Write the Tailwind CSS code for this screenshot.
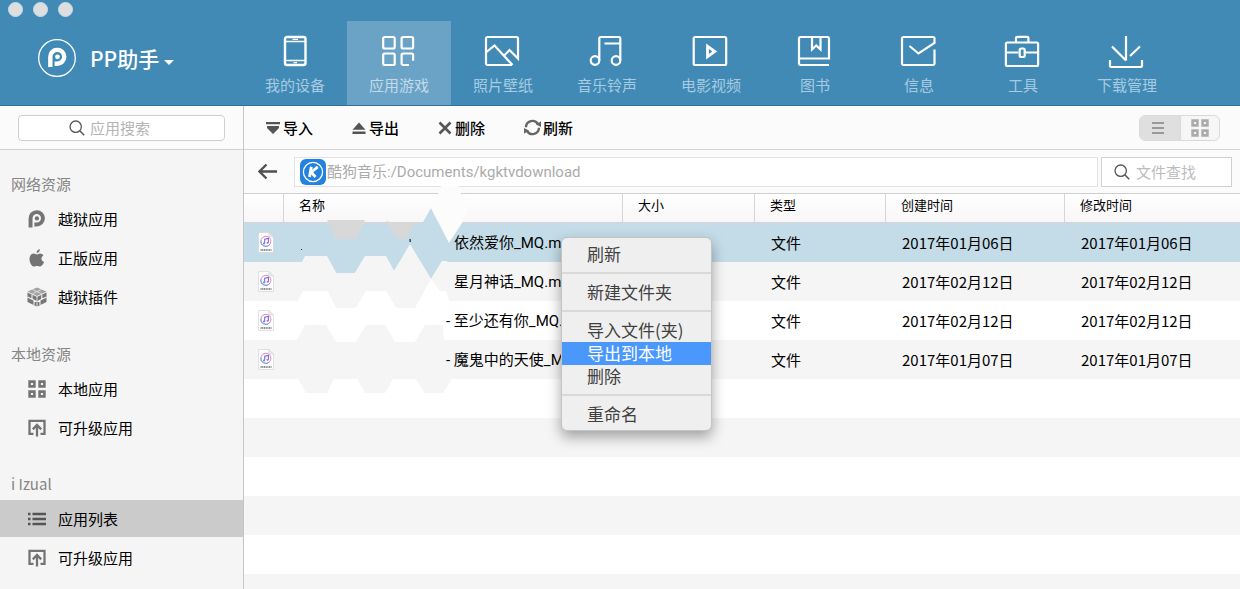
<!DOCTYPE html>
<html lang="zh-CN">
<head>
<meta charset="utf-8">
<meta name="viewport" content="width=device-width, initial-scale=1">
<title>PP助手</title>
<script src="https://cdn.jsdelivr.net/npm/@tailwindcss/browser@4"></script>
</head>
<body class="flex h-screen flex-col overflow-hidden bg-white font-['Noto_Sans_CJK_SC',sans-serif] text-[15px] leading-6 text-black">

<!-- shared symbols -->
<svg class="hidden" aria-hidden="true">
  <symbol id="i-search" viewBox="0 0 16 16"><circle cx="6.7" cy="6.7" r="5.7" fill="none" stroke="currentColor" stroke-width="1.3"/><path d="M10.8 10.8 15.2 15.2" stroke="currentColor" stroke-width="1.5"/></symbol>
  <symbol id="i-grid" viewBox="0 0 18 18"><path fill="none" stroke="currentColor" stroke-width="2.6" d="M1.6 1.6h4.8v4.8H1.6zM11.6 1.6h4.8v4.8h-4.8zM1.6 11.6h4.8v4.8H1.6zM11.6 11.6h4.8v4.8h-4.8z"/></symbol>
  <symbol id="i-upgrade" viewBox="0 0 18 18"><path fill="none" stroke="currentColor" stroke-width="2.300" d="M5.500 14.800H1.500V1.800h15V14.800H12.500M9 17.500V6M4.800 10.400 9 6l4.200 4.400"/></symbol>
  <symbol id="i-p" viewBox="0 0 20 21"><path fill="none" stroke="currentColor" stroke-width="4.600" d="M3 20.500V9.800A7.300 7.300 0 1 1 10.300 17H7.500"/><circle cx="10.500" cy="9.800" r="2.500" fill="currentColor"/></symbol>
  <symbol id="i-file" viewBox="0 0 16 21"><path fill="#fff" stroke="#d2d2d6" stroke-width=".7" d="M.6.500h10.200l4.600 4.600v15.400H.6z"/><path fill="#e9e9ec" stroke="#d2d2d6" stroke-width=".5" d="M10.800.500v4.600h4.600z"/><circle cx="7.900" cy="9.300" r="5" fill="#fff" stroke="#e08ab8" stroke-width="1"/><path d="M3 8.500a5 5 0 0 0 8.700 4.200" fill="none" stroke="#63a9ee"/><path d="M6.700 11.400V7.200l3.700-.8v4.300" fill="none" stroke="#6f6be6" stroke-width="1.100"/><ellipse cx="5.900" cy="11.500" rx="1.100" ry=".9" fill="#5b8df0"/><ellipse cx="9.600" cy="10.800" rx="1.100" ry=".9" fill="#e0529a"/><path d="M2.500 18h11" stroke="#8e8e93" stroke-width="1.800" stroke-dasharray="1.200 .5"/></symbol>
</svg>

<header class="flex h-[106px] shrink-0 border-b border-[#2f6f9f] bg-[#418ab6]">
  <div class="flex w-[243px] shrink-0 flex-col">
    <div class="flex gap-[10px] pt-[2px] pl-2">
      <button aria-label="关闭" class="size-[15px] rounded-full border border-[#c5dcea] bg-[#dedede]"></button>
      <button aria-label="最小化" class="size-[15px] rounded-full border border-[#c5dcea] bg-[#dedede]"></button>
      <button aria-label="缩放" class="size-[15px] rounded-full border border-[#c5dcea] bg-[#dedede]"></button>
    </div>
    <button class="mt-[22px] flex items-center pl-[38px] text-[21px] leading-[38px] text-white">
      <svg class="size-[38px]" viewBox="0 0 38 38"><circle cx="19" cy="19" r="18.300" fill="none" stroke="#fff" stroke-width="1.300"/><use href="#i-p" x="9" y="8.500" width="20" height="20"/></svg>
      <span class="ml-[14px] font-medium">PP助手</span>
      <svg class="mt-2 ml-[5px] h-[5px] w-[10px]" viewBox="0 0 10 5"><path fill="#fff" d="M0 0h10L5 5z"/></svg>
    </button>
  </div>
  <nav class="flex min-w-0 flex-1 pt-[21px] text-[#a7cbe1]">
    <a href="#" class="flex w-[104px] flex-col items-center pt-[13px]">
      <svg class="size-[34px]" viewBox="0 0 34 34" fill="none" stroke="#fff" stroke-width="2"><rect x="7" y="3" width="20.500" height="28" rx="2" stroke-width="2.400"/><path d="M7 7.500h20.500M7 26.500h20.500" stroke-width="1.400"/><path d="M14.500 5.400h5.500M15.500 28.700h3.500" stroke-width="1.200"/></svg>
      <span class="mt-[5px]">我的设备</span></a>
    <a href="#" aria-current="page" class="flex w-[104px] flex-col items-center bg-[#6ba3c7] pt-[13px] text-[#c2dbea]">
      <svg class="size-[34px]" viewBox="0 0 34 34" fill="none" stroke="#fff" stroke-width="2.200"><rect x="1.200" y="3" width="11.500" height="11.500" rx="1.500"/><rect x="19.600" y="3" width="11.500" height="11.500" rx="1.500"/><rect x="1.200" y="19.500" width="11.500" height="11.500" rx="1.500"/><path d="M27 31H21.100a1.500 1.500 0 0 1-1.500-1.500V21a1.500 1.500 0 0 1 1.500-1.500h8.500a1.500 1.500 0 0 1 1.500 1.500v5.800"/></svg>
      <span class="mt-[5px]">应用游戏</span></a>
    <a href="#" class="flex w-[104px] flex-col items-center pt-[13px]">
      <svg class="size-[34px] overflow-visible" viewBox="1 0 34 34" fill="none" stroke="#fff" stroke-width="2.200"><path d="M27 31H2.500a1.500 1.500 0 0 1-1.500-1.500v-25A1.500 1.500 0 0 1 2.500 3h29A1.500 1.500 0 0 1 33 4.500V24.500L24.500 16 19.500 21.200"/><path d="M1.500 18 9.500 11.500 27.500 31"/></svg>
      <span class="mt-[5px]">照片壁纸</span></a>
    <a href="#" class="flex w-[104px] flex-col items-center pt-[13px]">
      <svg class="size-[34px] overflow-visible" viewBox="1 0 34 34" fill="none" stroke="#fff" stroke-width="2.200"><circle cx="6" cy="26.500" r="4.300"/><circle cx="27" cy="26.500" r="4.300"/><path d="M10.300 26.500V4.500A1.500 1.500 0 0 1 11.800 3h18a1.500 1.500 0 0 1 1.500 1.500v22M15.500 9.500h15.500"/></svg>
      <span class="mt-[5px]">音乐铃声</span></a>
    <a href="#" class="flex w-[104px] flex-col items-center pt-[13px]">
      <svg class="size-[34px] overflow-visible" viewBox="1 0 34 34" fill="none" stroke="#fff" stroke-width="2.200"><rect x="0.700" y="3" width="32.500" height="28" rx="1.500"/><path stroke-width="2.800" d="M14.500 12.200v10.500l7.300-5.200z"/></svg>
      <span class="mt-[5px]">电影视频</span></a>
    <a href="#" class="flex w-[104px] flex-col items-center pt-[13px]">
      <svg class="size-[34px] overflow-visible" viewBox="1 0 34 34" fill="none" stroke="#fff" stroke-width="2.200"><path d="M32 31H3.500A1.500 1.500 0 0 1 2 29.500v-25A1.500 1.500 0 0 1 3.500 3h27A1.500 1.500 0 0 1 32 4.500v20H2.500M15 3v12.500l4.300-4 4.200 4V3"/></svg>
      <span class="mt-[5px]">图书</span></a>
    <a href="#" class="flex w-[104px] flex-col items-center pt-[13px]">
      <svg class="size-[34px] overflow-visible" viewBox="1 0 34 34" fill="none" stroke="#fff" stroke-width="2.200"><path d="M33.500 15.500v14A1.500 1.500 0 0 1 32 31H2.500A1.500 1.500 0 0 1 1 29.500v-25A1.500 1.500 0 0 1 2.500 3H32a1.500 1.500 0 0 1 1.500 1.500V9L17.500 19.500 8.500 12"/></svg>
      <span class="mt-[5px]">信息</span></a>
    <a href="#" class="flex w-[104px] flex-col items-center pt-[13px]">
      <svg class="size-[34px] overflow-visible" viewBox="1 0 34 34" fill="none" stroke="#fff" stroke-width="2.200"><rect x=".9" y="8.500" width="32.200" height="23.500" rx="1.500"/><path d="M11 8V4a1.200 1.200 0 0 1 1.200-1.200h10A1.200 1.200 0 0 1 23.400 4v4M1 18.500h12.500M20.500 18.500H33"/><rect x="14.700" y="14.500" width="5" height="8.500" rx="1.500"/></svg>
      <span class="mt-[5px]">工具</span></a>
    <a href="#" class="flex w-[104px] flex-col items-center pt-[13px]">
      <svg class="size-[34px] overflow-visible" viewBox="1 0 34 34" fill="none" stroke="#fff" stroke-width="2.200"><path d="M17 2v24.500M3 12.500 17 26.500M31 12.500 21 22M1 26v6a1 1 0 0 0 1 1h30a1 1 0 0 0 1-1v-6"/></svg>
      <span class="mt-[5px]">下载管理</span></a>
  </nav>
</header>

<div class="flex min-h-0 flex-1">
  <aside class="flex w-[244px] shrink-0 flex-col border-r border-[#c6c6c6] bg-[#f5f5f5]">
    <div class="flex h-11 shrink-0 items-center border-b border-[#d2d2d2] bg-[#fbfbfb] px-[18px]">
      <label class="flex h-[26px] w-full items-center rounded-[4px] border border-[#cfcfcf] bg-white pl-[50px] text-[#555]">
        <svg class="size-4 shrink-0"><use href="#i-search"/></svg>
        <input type="search" aria-label="应用搜索" placeholder="应用搜索" class="ml-[5px] w-full min-w-0 bg-transparent outline-none placeholder:text-[#b4b4b4]">
      </label>
    </div>
    <nav class="pt-[22px]">
      <h2 class="mb-1 pl-[11px] text-[#858585]">网络资源</h2>
      <ul class="mb-[27px] flex flex-col gap-[2px]">
        <li><a href="#" class="flex h-[37px] items-center gap-3 pl-7"><svg class="h-[18px] w-[17px] mr-px text-[#747474]"><use href="#i-p"/></svg>越狱应用</a></li>
        <li><a href="#" class="flex h-[37px] items-center gap-3 pl-7"><svg class="h-[18px] w-[18px]" viewBox="0 0 18 18" fill="#747474"><path d="M11.900 4.600c1.500 0 2.700.7 3.500 1.800-2.900 1.700-2.500 5.500.6 6.700-.8 2.200-2.300 4.500-3.900 4.500-1.100 0-1.600-.7-3-.7s-2 .7-3 .7C3.900 17.600 1.500 13.700 1.500 10c0-3.500 2.200-5.400 4.400-5.400 1.300 0 2.200.8 3.200.8.900 0 1.700-.8 2.800-.8zM11.800.3c.2 2-1.400 3.700-3.200 3.700C8.400 2.100 10 .5 11.800.3z"/></svg>正版应用</a></li>
        <li><a href="#" class="flex h-[37px] items-center gap-3 pl-7"><svg class="h-5 w-[18px] overflow-visible" viewBox="0 0 18 20"><path fill="#a2a2a2" d="M9 .5 18.500 4.500 9 9-.5 4.500z"/><path fill="#777" d="M-.5 5.500 8.600 9.800V19.500L-.5 15zM9.400 9.800 18.500 5.500V15l-9.100 4.500z"/><path stroke="#dcdcdc" stroke-width="1" fill="none" d="M4.500 2.500 13.500 6.700M13.500 2.500 4.500 6.700"/><path stroke="#f5f5f5" stroke-width="1.100" fill="none" d="M-.5 10l9.100 4.400M9.400 14.400 18.500 10M4 7.500v4.600M6 13.500v4.500M13.800 7.800v4.500M12 13.500v4.500"/></svg>越狱插件</a></li>
      </ul>
      <h2 class="mb-1 pl-[11px] text-[#858585]">本地资源</h2>
      <ul class="mb-[26px] flex flex-col gap-[2px]">
        <li><a href="#" class="flex h-[37px] items-center gap-3 pl-7"><svg class="size-[18px] text-[#747474]"><use href="#i-grid"/></svg>本地应用</a></li>
        <li><a href="#" class="flex h-[37px] items-center gap-3 pl-7"><svg class="size-[18px] text-[#747474]"><use href="#i-upgrade"/></svg>可升级应用</a></li>
      </ul>
      <h2 class="mb-1 pl-[11px] text-[#858585]">i Izual</h2>
      <ul class="flex flex-col gap-[2px]">
        <li><a href="#" aria-current="page" class="flex h-[37px] items-center gap-3 bg-[#cbcbcb] pl-7"><svg class="size-[18px]" viewBox="0 0 18 18"><path stroke="#555" stroke-width="2.500" d="M0 4h2.500M4.500 4H18M0 9h2.500M4.500 9H18M0 14h2.500M4.500 14H18"/></svg>应用列表</a></li>
        <li><a href="#" class="flex h-[37px] items-center gap-3 pl-7"><svg class="size-[18px] text-[#747474]"><use href="#i-upgrade"/></svg>可升级应用</a></li>
      </ul>
    </nav>
  </aside>

  <main class="relative min-w-0 flex-1 overflow-hidden bg-white">
    <div class="flex h-11 items-center justify-between border-b border-[#d2d2d2] bg-[#fbfbfb] pr-5 pl-[22px]">
      <div class="flex gap-[39px] font-medium">
        <button class="flex items-center gap-[3px]"><svg class="size-[14px]" viewBox="0 0 14 14" fill="#555"><path d="M0 1h14v2.200H0zM1 5h12v2l-6 6-6-6z"/></svg>导入</button>
        <button class="flex items-center gap-[3px]"><svg class="size-[14px]" viewBox="0 0 14 14" fill="#555"><path d="M.5 8.800 7 1.500l6.500 7.300zM.5 10.600h13v2.400H.5z"/></svg>导出</button>
        <button class="flex items-center gap-[3px]"><svg class="size-[14px]" viewBox="0 0 14 14"><path stroke="#555" stroke-width="2.600" d="M1.500 1.500l11 11M12.500 1.500l-11 11"/></svg>删除</button>
        <button class="flex items-center gap-[2px]"><svg class="size-[17px]" viewBox="0 0 17 17"><path fill="none" stroke="#666" stroke-width="2.400" d="M2 8.300A6.500 6.500 0 0 1 14 5M15 8.700A6.500 6.500 0 0 1 3 12"/><path fill="#666" d="M17 2.300V8l-5-2.400zM0 14.700V9l5 2.400z"/></svg>刷新</button>
      </div>
      <div class="flex h-[26px] w-[81px] overflow-hidden rounded-[6px] border border-[#dadada] bg-[#f6f6f6] text-[#aaa]">
        <button aria-label="列表视图" aria-pressed="true" class="flex w-[41px] items-center justify-center border-r border-[#dadada] bg-[#dfdfdf] pr-1"><svg class="size-[14px]" viewBox="0 0 14 14"><path stroke="#999" stroke-width="2.200" d="M1 2h12M1 7h12M1 12h12"/></svg></button>
        <button aria-label="图标视图" aria-pressed="false" class="flex flex-1 items-center justify-center"><svg class="size-[18px]"><use href="#i-grid"/></svg></button>
      </div>
    </div>

    <div class="flex h-11 items-center border-b border-[#cfcfcf] bg-[#fbfbfb] pr-2 pl-[14px]">
      <button aria-label="返回" class="mr-[17px]"><svg class="h-[17px] w-[19px]" viewBox="0 0 19 17"><path fill="none" stroke="#505050" stroke-width="2.300" d="M19 8.500H1.500M8.500 1.500l-7 7 7 7"/></svg></button>
      <label class="flex h-[30px] min-w-0 flex-1 items-center border border-[#e2e2e2] bg-white pl-[5px]">
        <svg class="size-[26px] shrink-0" viewBox="0 0 26 26"><rect width="26" height="26" rx="6" fill="#2482df"/><circle cx="13" cy="13" r="9.600" fill="none" stroke="#fff" stroke-width="1.300"/><path fill="none" stroke="#fff" stroke-width="2.800" d="M11.300 7.800 9.500 18M17.800 7.800 11.300 13.200 15.500 18"/></svg>
        <input type="text" aria-label="路径" value="酷狗音乐:/Documents/kgktvdownload" class="ml-px w-full min-w-0 bg-transparent font-[Roboto,'Noto_Sans_CJK_SC',sans-serif] text-[#ababab] outline-none">
      </label>
      <label class="ml-[3px] flex h-[30px] w-[131px] items-center border border-[#cfcfcf] bg-white pl-3 text-[#555]">
        <svg class="size-4 shrink-0"><use href="#i-search"/></svg>
        <input type="search" aria-label="文件查找" placeholder="文件查找" class="ml-[6px] w-full min-w-0 bg-transparent outline-none placeholder:text-[#bcbcbc]">
      </label>
    </div>

    <table class="w-full table-fixed border-separate border-spacing-0 text-left">
      <colgroup><col class="w-[39px]"><col class="w-[339px]"><col class="w-[132px]"><col class="w-[131px]"><col class="w-[179px]"><col></colgroup>
      <thead class="text-[13px] leading-[22px]">
        <tr class="h-[29px] bg-linear-to-b from-white to-[#f8f6f6]">
          <th class="border-b border-[#d6d6d6] p-0"></th>
          <th class="border-b border-l border-[#d6d6d6] p-0 pb-[6px] pl-[15px] font-normal">名称</th>
          <th class="border-b border-l border-[#d6d6d6] p-0 pb-[6px] pl-[15px] font-normal">大小</th>
          <th class="border-b border-l border-[#d6d6d6] p-0 pb-[6px] pl-[15px] font-normal">类型</th>
          <th class="border-b border-l border-[#d6d6d6] p-0 pb-[6px] pl-[15px] font-normal">创建时间</th>
          <th class="border-b border-l border-[#d6d6d6] p-0 pb-[6px] pl-[15px] font-normal">修改时间</th>
        </tr>
      </thead>
      <tbody>
        <tr class="h-[39px] bg-[#c3dce8]" aria-selected="true"><td class="p-0 pl-[14px]"><svg class="h-[21px] w-4"><use href="#i-file"/></svg></td><td class="p-0 pl-[171px] font-[Roboto,'Noto_Sans_CJK_SC',sans-serif] whitespace-nowrap">依然爱你_MQ.m4a</td><td></td><td class="p-0 pl-[17px]">文件</td><td class="p-0 pl-[17px]">2017年01月06日</td><td class="p-0 pl-[17px]">2017年01月06日</td></tr>
        <tr class="h-[39px] bg-[#f5f5f5]"><td class="p-0 pl-[14px]"><svg class="h-[21px] w-4"><use href="#i-file"/></svg></td><td class="p-0 pl-[171px] font-[Roboto,'Noto_Sans_CJK_SC',sans-serif] whitespace-nowrap">星月神话_MQ.m4a</td><td></td><td class="p-0 pl-[17px]">文件</td><td class="p-0 pl-[17px]">2017年02月12日</td><td class="p-0 pl-[17px]">2017年02月12日</td></tr>
        <tr class="h-[39px]"><td class="p-0 pl-[14px]"><svg class="h-[21px] w-4"><use href="#i-file"/></svg></td><td class="p-0 pl-[163px] font-[Roboto,'Noto_Sans_CJK_SC',sans-serif] whitespace-nowrap">- 至少还有你_MQ.m4a</td><td></td><td class="p-0 pl-[17px]">文件</td><td class="p-0 pl-[17px]">2017年02月12日</td><td class="p-0 pl-[17px]">2017年02月12日</td></tr>
        <tr class="h-[39px] bg-[#f5f5f5]"><td class="p-0 pl-[14px]"><svg class="h-[21px] w-4"><use href="#i-file"/></svg></td><td class="p-0 pl-[163px] font-[Roboto,'Noto_Sans_CJK_SC',sans-serif] whitespace-nowrap">- 魔鬼中的天使_MQ</td><td></td><td class="p-0 pl-[17px]">文件</td><td class="p-0 pl-[17px]">2017年01月07日</td><td class="p-0 pl-[17px]">2017年01月07日</td></tr>
        <tr class="h-[39px]"><td colspan="6"></td></tr>
        <tr class="h-[39px] bg-[#f5f5f5]"><td colspan="6"></td></tr>
        <tr class="h-[39px]"><td colspan="6"></td></tr>
        <tr class="h-[39px] bg-[#f5f5f5]"><td colspan="6"></td></tr>
        <tr class="h-[39px]"><td colspan="6"></td></tr>
        <tr class="h-[39px] bg-[#f5f5f5]"><td colspan="6"></td></tr>
      </tbody>
    </table>

    <!-- mosaic that hides the artist names -->
    <svg class="pointer-events-none absolute top-[74px] left-[46px] h-[220px] w-[190px]" viewBox="290 180 190 220" aria-hidden="true">
      <path fill="#c3dce8" d="M296 235V262H302L305 256H327L336 273H355L365 256H386L394 271 410 244 431 279 442 261H450L440 235z"/>
      <path fill="#f5f5f5" d="M296 262H302L305 256H327L336 273H355L365 256H386L394 271 410 244 431 279 442 261H447L449 291H446L431 279 415 308H396L386 291H366L356 308H336L328 291H303L297 301z"/>
      <path fill="#fff" d="M297 302 303 291H328L336 308H356L366 291H386L396 308H415L431 279 440 291H446L450 302 444 325H425L415 342H395L385 325H366L356 342H336L326 325H305L297 340z"/>
      <path fill="#f5f5f5" d="M297 340 305 325H326L336 342H356L366 325H385L395 342H415L425 325H443L444 341V379H452L443 393H425L416 379H393L385 393H365L357 379H334L327 393H306L298 379z"/>
      <path fill="#c3dce8" d="M422 224 431 208 449 243V250H422z"/>
      <path fill="#fcfcfc" d="M431 208 438 194 441 186H459L461 194 468 200V211L462 223 449 243z"/>
      <path fill="#d9d8d9" d="M327 220H365L356 239H336zM386 220 389 222H415L407 239H397z"/>
      <path fill="#234" d="M409.500 239h1.300v3h-1.300zM301 249h1v1h-1z"/>
    </svg>

    <!-- context menu -->
    <div role="menu" class="absolute top-[131px] left-[317px] w-[151px] rounded-[6px] border border-[#c4c4c4] bg-[#efefef] pt-[5px] pb-1 text-[17px] leading-[21px] text-[#404040] shadow-[0_6px_14px_rgba(0,0,0,0.35)]">
      <button role="menuitem" class="block w-full pb-[2px] pl-[25px] text-left">刷新</button>
      <hr class="mt-[6px] mb-[7px] border-t-2 border-[#d9d9d9]">
      <button role="menuitem" class="block w-full pb-[2px] pl-[25px] text-left">新建文件夹</button>
      <hr class="mt-[6px] mb-[7px] border-t-2 border-[#d9d9d9]">
      <button role="menuitem" class="block w-full pb-[2px] pl-[25px] text-left">导入文件(夹)</button>
      <button role="menuitem" class="block w-full bg-[#4a98fc] pb-[2px] pl-[25px] text-left text-white">导出到本地</button>
      <button role="menuitem" class="block w-full pb-[2px] pl-[25px] text-left">删除</button>
      <hr class="mt-[6px] mb-[7px] border-t-2 border-[#d9d9d9]">
      <button role="menuitem" class="block w-full pb-[2px] pl-[25px] text-left">重命名</button>
    </div>
  </main>
</div>
</body>
</html>
